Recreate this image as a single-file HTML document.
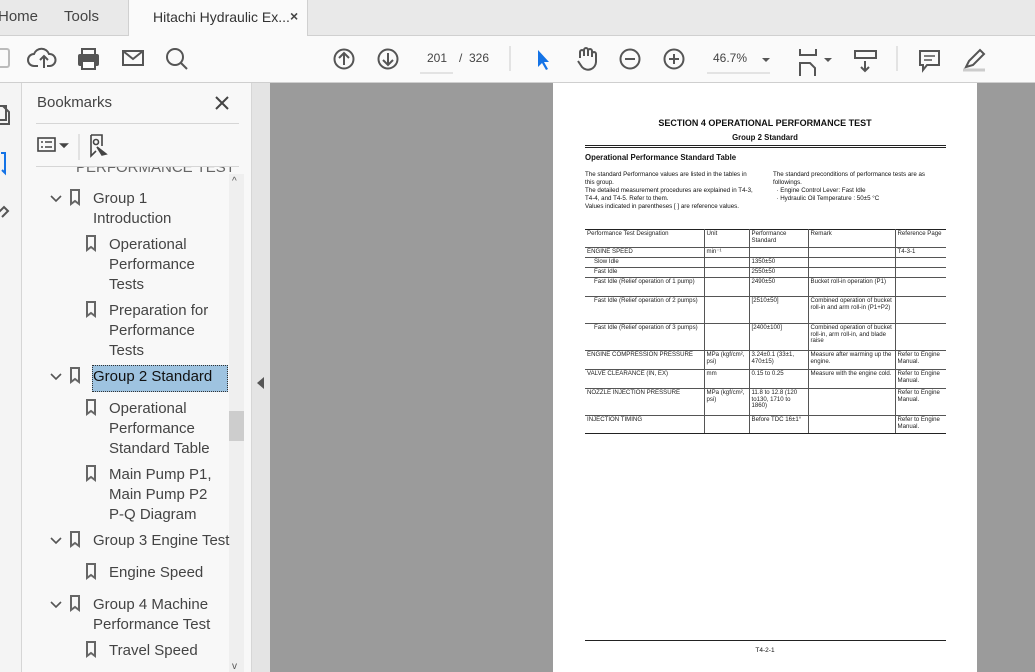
<!DOCTYPE html>
<html><head><style>
*{margin:0;padding:0;box-sizing:border-box}
body{width:1035px;height:672px;overflow:hidden;font-family:"Liberation Sans",sans-serif;background:#9b9b9b;position:relative}
.a{position:absolute}
#tabs{left:0;top:0;width:1035px;height:36px;background:#e9e9e9;border-bottom:1px solid #d0d0d0}
#tb{left:0;top:36px;width:1035px;height:47px;background:#fafafa;border-bottom:1px solid #cfcfcf}
.t{font-size:15px;color:#444}
#rail{left:0;top:83px;width:22px;height:589px;background:#f4f4f4;border-right:1px solid #d6d6d6}
#panel{left:22px;top:83px;width:230px;height:589px;background:#f8f8f8}
#strip{left:251px;top:83px;width:19px;height:589px;background:#e4e4e4;border-left:1px solid #d6d6d6}
.bm{font-size:15px;color:#444;line-height:20px}
.pg{left:553px;top:83px;width:424px;height:589px;background:#fff}
.pt{font-family:"Liberation Sans",sans-serif;color:#111}
table{border-collapse:collapse;font-size:6.1px;color:#222;position:absolute;left:585px;top:229px;width:361px;table-layout:fixed}
td{border:1px solid #555;vertical-align:top;padding:1px 2px 0;line-height:6.6px;overflow:hidden}
tr.h td{border-top:1.5px solid #222}
table td{border-left:none}table td+td{border-left:1px solid #555}table td:last-child{border-right:none}
</style></head><body>
<div id="tabs" class="a">
 <div class="a t" style="left:-2px;top:8px">Home</div>
 <div class="a t" style="left:64px;top:8px">Tools</div>
 <div class="a" style="left:128px;top:0;width:180px;height:36px;background:#fafafa;border-left:1px solid #d0d0d0;border-right:1px solid #d0d0d0"></div>
 <div class="a" style="left:153px;top:9px;font-size:14px;color:#333">Hitachi Hydraulic Ex...</div>
 <div class="a" style="left:290px;top:8px;font-size:14px;color:#444;font-weight:bold">×</div>
</div>
<div id="tb" class="a">
 <svg class="a" style="left:0;top:0" width="1035" height="47" fill="none" stroke="#555" stroke-width="2">
  <rect x="-6" y="13" width="15" height="18" rx="2" stroke="#bbb"/>
  <path d="M38 30h-4a6 6 0 0 1 0-12 8 8 0 0 1 15 0 6 6 0 0 1 1 12h-3M44 32V20M40 24l4-4 4 4"/>
  <rect x="79" y="19" width="19" height="10" rx="1" fill="#555"/><rect x="82" y="13" width="13" height="6"/><rect x="82" y="25" width="13" height="8" fill="#fff"/>
  <rect x="123" y="15" width="20" height="14"/><path d="M123 15l10 8 10-8"/>
  <circle cx="175" cy="21" r="8"/><path d="M181 27l6 6"/>
  <circle cx="344" cy="23" r="9.5"/><path d="M344 29V17M339 22l5-5 5 5"/>
  <circle cx="388" cy="23" r="9.5"/><path d="M388 17v12M383 24l5 5 5-5"/>
  <path d="M420 37h33" stroke="#ccc" stroke-width="1"/>
  <path d="M510 10v25" stroke="#ccc" stroke-width="1"/>
  <path d="M538 14l0 17 4-4 4 7 2-1-4-7 5 0z" fill="#1473e6" stroke="none"/>
  <path d="M580 22v-6a2 2 0 0 1 4 0v4-6a2 2 0 0 1 4 0v6-5a2 2 0 0 1 4 0v6-3a2 2 0 0 1 4 0v8a8 8 0 0 1-14 5l-4-6"/>
  <circle cx="630" cy="23" r="9.5"/><path d="M625 23h10"/>
  <circle cx="674" cy="23" r="9.5"/><path d="M669 23h10M674 18v10"/>
  <path d="M707 37h63" stroke="#ccc" stroke-width="1"/>
  <path d="M762 22l4 4 4-4z" fill="#555" stroke="none"/>
  <path d="M800 13v6h16v-6M800 40V27h10l5 5v8"/>
  <path d="M824 22l4 4 4-4z" fill="#555" stroke="none"/>
  <rect x="855" y="15" width="21" height="7"/><path d="M865 25v10M861 31l4 4 4-4"/>
  <path d="M897 10v25" stroke="#ccc" stroke-width="1"/>
  <path d="M920 15h19v14h-12l-4 5v-5h-3z"/><path d="M924 20h11M924 24h8" stroke-width="1.5"/>
  <path d="M966 31l3-6 11-11 4 4-11 11z"/><path d="M963 34h22" stroke="#ccc" stroke-width="3"/>
 </svg>
 <div class="a" style="left:427px;top:15px;font-size:12px;color:#444">201</div>
 <div class="a" style="left:459px;top:15px;font-size:12px;color:#444">/&nbsp;&nbsp;326</div>
 <div class="a" style="left:713px;top:15px;font-size:12px;color:#444">46.7%</div>
</div>
<div id="rail" class="a">
 <svg width="22" height="200" fill="none" stroke="#555" stroke-width="2"><path d="M-2 23h8v14h-8M3 23l6 6v12h-10"/><path d="M1 70h4v20l-3-3" stroke="#1473e6"/><path d="M-2 130l6-6 4 4-6 6"/></svg>
</div>
<div id="panel" class="a">
 <div class="a" style="left:15px;top:11px;font-size:15px;color:#444">Bookmarks</div>
 <svg class="a" style="left:192px;top:12px" width="16" height="16" stroke="#444" stroke-width="2"><path d="M2 2l12 12M14 2L2 14"/></svg>
 <div class="a" style="left:14px;top:40px;width:203px;height:1px;background:#d6d6d6"></div>
 <svg class="a" style="left:14px;top:50px" width="100" height="30" fill="none" stroke="#444" stroke-width="1.6">
  <rect x="2" y="5" width="17" height="13"/><path d="M5 9h2M9 9h7M5 14h2M9 14h7"/><path d="M25 11l3 3 3-3z" fill="#444"/>
  <path d="M43 1v26" stroke="#ddd"/>
  <path d="M55 2h11v11M55 2v21l5-5"/><circle cx="60" cy="9" r="2.5"/><path d="M61 14l9 7-4 1z" fill="#444"/>
 </svg>
 <div class="a" style="left:14px;top:83px;width:203px;height:1px;background:#d6d6d6"></div>
 <div class="a" style="left:54px;top:84px;width:160px;height:11px;overflow:hidden"><div style="font-size:15px;color:#666;margin-top:-8px;white-space:nowrap">PERFORMANCE TEST</div></div>
 <div class="a" style="left:207px;top:91px;width:15px;height:498px;background:#efefef"></div>
 <div class="a" style="left:207px;top:328px;width:15px;height:30px;background:#cdcdcd"></div>
 <div class="a" style="left:210px;top:93px;font-size:10px;color:#555">^</div>
 <div class="a" style="left:210px;top:578px;font-size:10px;color:#555">v</div>
</div>
<svg class="a" style="left:22px;top:83px" width="210" height="589" fill="none" stroke="#555" stroke-width="1.6">
 <path d="M29 113l5 5 5-5"/>
 <path d="M29 291l5 5 5-5M29 455l5 5 5-5M29 519l5 5 5-5"/>
 <g stroke="#666" stroke-width="2"><path d="M49 107v14l4-3 4 3v-14z"/><path d="M65 153v14l4-3 4 3v-14z"/><path d="M65 219v14l4-3 4 3v-14z"/><path d="M49 285v14l4-3 4 3v-14z"/><path d="M65 317v14l4-3 4 3v-14z"/><path d="M65 383v14l4-3 4 3v-14z"/><path d="M49 449v14l4-3 4 3v-14z"/><path d="M65 481v14l4-3 4 3v-14z"/><path d="M49 513v14l4-3 4 3v-14z"/><path d="M65 559v14l4-3 4 3v-14z"/></g>
</svg>
<div class="a" style="left:92px;top:365px;width:136px;height:27px;background:#9ec3e0;border:1px dotted #333"></div>
<div class="a bm" style="left:93px;top:189px">Group 1<br>Introduction</div>
<div class="a bm" style="left:109px;top:235px">Operational<br>Performance<br>Tests</div>
<div class="a bm" style="left:109px;top:301px">Preparation for<br>Performance<br>Tests</div>
<div class="a bm" style="left:93px;top:367px;color:#111">Group 2 Standard</div>
<div class="a bm" style="left:109px;top:399px">Operational<br>Performance<br>Standard Table</div>
<div class="a bm" style="left:109px;top:465px">Main Pump P1,<br>Main Pump P2<br>P-Q Diagram</div>
<div class="a bm" style="left:93px;top:531px">Group 3 Engine Test</div>
<div class="a bm" style="left:109px;top:563px">Engine Speed</div>
<div class="a bm" style="left:93px;top:595px">Group 4 Machine<br>Performance Test</div>
<div class="a bm" style="left:109px;top:641px">Travel Speed</div>
<div id="strip" class="a"><svg class="a" style="left:5px;top:294px" width="8" height="12"><path d="M7 0v12L0 6z" fill="#555"/></svg></div>
<div class="a pg">
 <div class="a pt" style="left:0;width:424px;text-align:center;top:35px;font-size:9px;font-weight:bold">SECTION 4 OPERATIONAL PERFORMANCE TEST</div>
 <div class="a pt" style="left:0;width:424px;text-align:center;top:50px;font-size:7.8px;font-weight:bold">Group 2 Standard</div>
 <div class="a" style="left:32px;top:62px;width:361px;height:3px;border-top:1px solid #222;border-bottom:1px solid #222"></div>
 <div class="a pt" style="left:32px;top:70px;font-size:7.8px;font-weight:bold">Operational Performance Standard Table</div>
 <div class="a pt" style="left:32px;top:88px;font-size:6.2px;line-height:8px;width:172px">The standard Performance values are listed in the tables in this group.<br>The detailed measurement procedures are explained in T4-3, T4-4, and T4-5. Refer to them.<br>Values indicated in parentheses [ ] are reference values.</div>
 <div class="a pt" style="left:220px;top:88px;font-size:6.2px;line-height:8px;width:175px">The standard preconditions of performance tests are as followings.<br>&nbsp;&nbsp;· Engine Control Lever: Fast Idle<br>&nbsp;&nbsp;· Hydraulic Oil Temperature : 50±5 °C</div>
 <div class="a" style="left:32px;top:557px;width:361px;height:1px;background:#222"></div>
 <div class="a pt" style="left:0;width:424px;text-align:center;top:564px;font-size:6.5px">T4-2-1</div>
</div>
<table>
<colgroup><col style="width:119px"><col style="width:45px"><col style="width:59px"><col style="width:87px"><col></colgroup>
<tr class="h" style="height:18px"><td>Performance Test Designation</td><td>Unit</td><td>Performance Standard</td><td>Remark</td><td>Reference Page</td></tr>
<tr style="height:10px"><td>ENGINE SPEED</td><td>min⁻¹</td><td></td><td></td><td>T4-3-1</td></tr>
<tr style="height:10px"><td style="padding-left:9px">Slow Idle</td><td></td><td>1350±50</td><td></td><td></td></tr>
<tr style="height:10px"><td style="padding-left:9px">Fast Idle</td><td></td><td>2550±50</td><td></td><td></td></tr>
<tr style="height:19px"><td style="padding-left:9px">Fast Idle (Relief operation of 1 pump)</td><td></td><td>2490±50</td><td>Bucket roll-in operation (P1)</td><td></td></tr>
<tr style="height:27px"><td style="padding-left:9px">Fast Idle (Relief operation of 2 pumps)</td><td></td><td>[2510±50]</td><td>Combined operation of bucket roll-in and arm roll-in (P1+P2)</td><td></td></tr>
<tr style="height:27px"><td style="padding-left:9px">Fast Idle (Relief operation of 3 pumps)</td><td></td><td>[2400±100]</td><td>Combined operation of bucket roll-in, arm roll-in, and blade raise</td><td></td></tr>
<tr style="height:19px"><td>ENGINE COMPRESSION PRESSURE</td><td>MPa (kgf/cm², psi)</td><td>3.24±0.1 (33±1, 470±15)</td><td>Measure after warming up the engine.</td><td>Refer to Engine Manual.</td></tr>
<tr style="height:19px"><td>VALVE CLEARANCE (IN, EX)</td><td>mm</td><td>0.15 to 0.25</td><td>Measure with the engine cold.</td><td>Refer to Engine Manual.</td></tr>
<tr style="height:27px"><td>NOZZLE INJECTION PRESSURE</td><td>MPa (kgf/cm², psi)</td><td>11.8 to 12.8 (120 to130, 1710 to 1860)</td><td></td><td>Refer to Engine Manual.</td></tr>
<tr style="height:18px"><td style="border-bottom:1.5px solid #222">INJECTION TIMING</td><td style="border-bottom:1.5px solid #222"></td><td style="border-bottom:1.5px solid #222">Before TDC 16±1°</td><td style="border-bottom:1.5px solid #222"></td><td style="border-bottom:1.5px solid #222">Refer to Engine Manual.</td></tr>
</table>
</body></html>
